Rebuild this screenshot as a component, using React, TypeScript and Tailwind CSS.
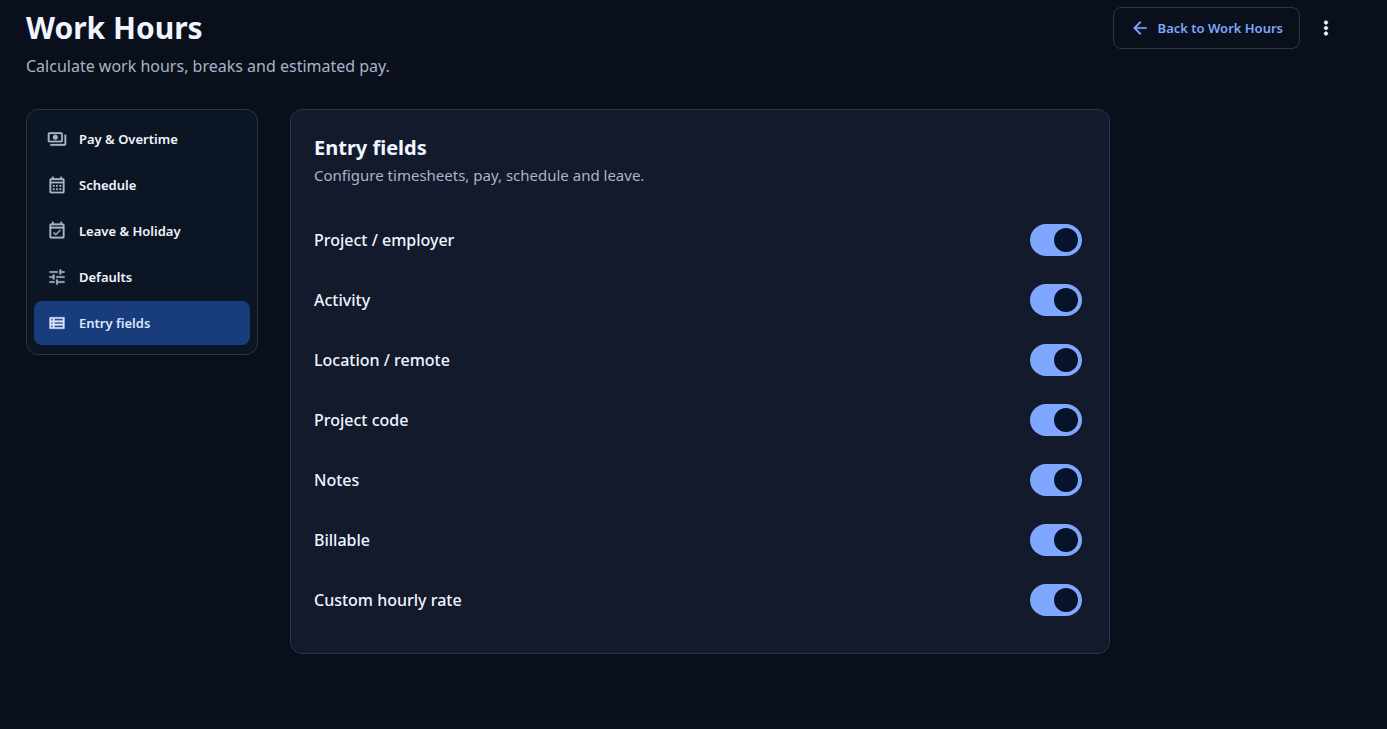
import { useState } from 'react';
import {
  MdArrowBack,
  MdMoreVert,
  MdOutlineCalendarMonth,
  MdOutlineEventAvailable,
  MdOutlinePayments,
  MdOutlineTune,
  MdOutlineViewList,
} from 'react-icons/md';

const SECTIONS = [
  { id: 'pay', label: 'Pay & Overtime', icon: MdOutlinePayments },
  { id: 'schedule', label: 'Schedule', icon: MdOutlineCalendarMonth },
  { id: 'leave', label: 'Leave & Holiday', icon: MdOutlineEventAvailable },
  { id: 'defaults', label: 'Defaults', icon: MdOutlineTune },
  { id: 'fields', label: 'Entry fields', icon: MdOutlineViewList },
];

const FIELDS = [
  { id: 'project', label: 'Project / employer' },
  { id: 'activity', label: 'Activity' },
  { id: 'location', label: 'Location / remote' },
  { id: 'code', label: 'Project code' },
  { id: 'notes', label: 'Notes' },
  { id: 'billable', label: 'Billable' },
  { id: 'rate', label: 'Custom hourly rate' },
];

export default function App() {
  const [section, setSection] = useState('fields');
  const [enabled, setEnabled] = useState<string[]>(FIELDS.map(f => f.id));

  const toggle = (id: string) => {
    setEnabled(prev => (prev.includes(id) ? prev.filter(x => x !== id) : [...prev, id]));
  };

  return (
    <div className="min-h-screen bg-[#090f1b] pl-[26px] pr-[41px] pt-[7px] pb-8 font-['Noto_Sans',sans-serif] text-[#f1f5ff]">
      <header className="flex items-start justify-between">
        <div>
          <h1 className="text-[30px] leading-[42px] font-bold">Work Hours</h1>
          <p className="mt-1 text-base leading-[26px] text-[#a9b4c8]">Calculate work hours, breaks and estimated pay.</p>
        </div>
        <div className="flex items-center gap-1.5">
          <a href="#work-hours" className="flex h-[42px] items-center gap-2 rounded-lg border border-[#263650] px-4 text-[13px] font-semibold text-[#7fa7ff]">
            <MdArrowBack size={20} strokeWidth={0.3} className="[&>path[fill=none]]:stroke-none" />
            <span className="pt-0.5">Back to Work Hours</span>
          </a>
          <button type="button" aria-label="More options" className="flex size-10 items-center justify-center rounded-full">
            <MdMoreVert size={22} strokeWidth={0.6} className="[&>path[fill=none]]:stroke-none" />
          </button>
        </div>
      </header>

      <div className="mt-[30px] flex items-start gap-8">
        {/* Settings sections */}
        <nav className="flex w-[232px] shrink-0 flex-col gap-0.5 rounded-xl border border-[#263650] bg-[#0c1524] px-[7px] pt-[7px] pb-[9px]">
          {SECTIONS.map(({ id, label, icon: Icon }) => (
            <button
              key={id}
              type="button"
              onClick={() => setSection(id)}
              className={`flex h-11 items-center gap-3 rounded-lg px-[13px] text-left text-[13px] font-semibold ${section === id ? 'bg-[#193d7c] text-[#dbe6ff]' : ''}`}
            >
              <Icon
                size={20}
                strokeWidth={0.3}
                className={`[&>path[fill=none]]:stroke-none ${section === id ? '' : 'text-[#a9b4c8]'}`}
              />
              <span className="pt-0.5">{label}</span>
            </button>
          ))}
        </nav>

        {/* Entry fields */}
        <main className="min-w-0 max-w-[820px] flex-1 rounded-xl border border-[#263650] bg-[#121a2c] px-[23px] pt-6 pb-[23px]">
          <h2 className="text-xl leading-7 font-bold">Entry fields</h2>
          <p className="text-[15px] leading-[26px] text-[#a9b4c8]">Configure timesheets, pay, schedule and leave.</p>
          <div className="mt-[22px]">
            {FIELDS.map(f => (
              <label key={f.id} className="flex h-[60px] cursor-pointer items-center justify-between pr-1 text-base font-medium">
                {f.label}
                <input
                  type="checkbox"
                  role="switch"
                  checked={enabled.includes(f.id)}
                  onChange={() => toggle(f.id)}
                  className="flex h-8 w-[52px] shrink-0 cursor-pointer appearance-none items-center rounded-full bg-[#334155] px-1 before:size-6 before:rounded-full before:bg-[#061328] before:transition-transform checked:bg-[#7fa7ff] checked:before:translate-x-5"
                />
              </label>
            ))}
          </div>
        </main>
      </div>
    </div>
  );
}
